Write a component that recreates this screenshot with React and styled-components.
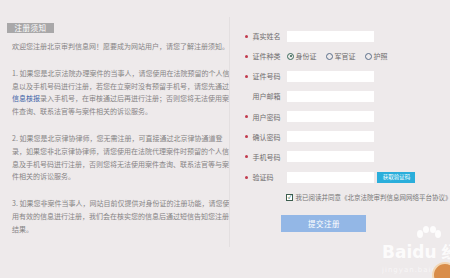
import styled, { createGlobalStyle } from "styled-components";

const GlobalStyle = createGlobalStyle`
  html, body {
    margin: 0;
    padding: 0;
    background: #eeeaeb;
  }
  body {
    font-family: "Noto Sans CJK SC", "Noto Sans", sans-serif;
  }
`;

const Page = styled.div`
  position: relative;
  width: 450px;
  height: 278px;
  display: flex;
  background: #eeeaeb;
  overflow: hidden;
`;

const EdgeStrip = styled.div`
  width: 3px;
  background: #8e9db2;
`;

const NoticePanel = styled.div`
  width: 247px;
  padding: 23px 0 0 7px;
  box-sizing: border-box;
`;

const NoticeTab = styled.div`
  width: 47px;
  height: 10px;
  background: #a9a8a9;
  color: #fff;
  font-size: 7.5px;
  line-height: 10px;
  text-align: center;
  letter-spacing: 0.5px;
`;

const NoticeBody = styled.div`
  padding: 7px 0 0 5px;
  color: #868485;
  font-size: 7px;
  line-height: 12.8px;
  white-space: nowrap;
`;

const Para = styled.p`
  margin: 0 0 14px;
`;

const Link = styled.span`
  color: #3e64a8;
`;

const FormPanel = styled.div`
  margin-top: 17px;
  height: 230px;
  flex: 1;
  border-left: 1px solid #e3dfe0;
  padding: 9px 0 0 15px;
  box-sizing: border-box;
  font-size: 7px;
  color: #6e6c6d;
`;

const Row = styled.div`
  display: flex;
  align-items: center;
  height: 20.15px;
`;

const Dot = styled.span`
  width: 3px;
  height: 3px;
  border-radius: 50%;
  background: ${(p) => (p.$show ? "#c23b4e" : "transparent")};
  margin-right: 4px;
`;

const Label = styled.span`
  width: 35px;
  white-space: nowrap;
`;

const Input = styled.div`
  width: 87px;
  height: 11px;
  background: #fff;
`;

const RadioGroup = styled.div`
  display: flex;
  gap: 10px;
`;

const RadioItem = styled.span`
  display: flex;
  align-items: center;
  gap: 1px;
  white-space: nowrap;
`;

const RadioCircle = styled.span`
  width: 5px;
  height: 5px;
  border: 1px solid ${(p) => (p.$on ? "#3a6a5a" : "#5a6f8a")};
  border-radius: 50%;
  display: flex;
  align-items: center;
  justify-content: center;
  &::after {
    content: "";
    width: 2px;
    height: 2px;
    border-radius: 50%;
    background: ${(p) => (p.$on ? "#2f5f4d" : "transparent")};
  }
`;

const CodeButton = styled.span`
  margin-left: 3px;
  width: 38px;
  height: 11px;
  background: #2aaedb;
  color: #fff;
  font-size: 5.5px;
  line-height: 11px;
  text-align: center;
`;

const AgreeRow = styled.div`
  display: flex;
  align-items: center;
  gap: 2px;
  margin: 5px 0 0 41px;
  white-space: nowrap;
  font-size: 6.5px;
  color: #777;
`;

const CheckBox = styled.span`
  width: 5px;
  height: 5px;
  border: 1px solid #3c5d4e;
  background: #fff;
  display: flex;
  align-items: center;
  justify-content: center;
  font-size: 6px;
  line-height: 1;
  color: #2f5f4d;
`;

const SubmitButton = styled.div`
  margin: 13px 0 0 36px;
  width: 85px;
  height: 17px;
  background: #93b7e6;
  color: #fff;
  font-size: 7.5px;
  line-height: 17px;
  text-align: center;
  letter-spacing: 0.5px;
`;

const Watermark = styled.div`
  position: absolute;
  left: 382px;
  top: 226px;
  width: 68px;
  height: 52px;
  overflow: hidden;
  color: rgba(255, 255, 255, 0.85);
  font-family: "DejaVu Sans", sans-serif;
  pointer-events: none;
  white-space: nowrap;
`;

const WaterWord = styled.div`
  position: absolute;
  left: 0;
  top: 15px;
  font-size: 17px;
  font-weight: bold;
  line-height: 22px;
`;

const WaterSub = styled.div`
  position: absolute;
  left: 0;
  top: 39px;
  font-size: 7px;
  line-height: 10px;
  color: rgba(255, 255, 255, 0.6);
  letter-spacing: 1px;
`;

const Avatar = styled.div`
  position: absolute;
  right: -8px;
  bottom: -10px;
  width: 22px;
  height: 22px;
  border-radius: 50%;
  background: #d98d4a;
  border: 2px solid #f3d7b5;
`;

const fields = [
  { label: "真实姓名", req: true },
  { label: "证件种类", req: true, radio: true },
  { label: "证件号码", req: true },
  { label: "用户邮箱", req: false },
  { label: "用户密码", req: true },
  { label: "确认密码", req: true },
  { label: "手机号码", req: true },
  { label: "验证码", req: true, code: true },
];

const App = () => {
  return (
    <Page>
      <GlobalStyle />
      <EdgeStrip />
      <NoticePanel>
        <NoticeTab>注册须知</NoticeTab>
        <NoticeBody>
          <Para>欢迎您注册北京审判信息网！愿要成为网站用户，请您了解注册须知。</Para>
          <Para>
            1. 如果您是北京法院办理案件的当事人，请您使用在法院预留的个人信
            <br />
            息以及手机号码进行注册，若您在立案时没有预留手机号，请您先通过
            <br />
            <Link>信息核报</Link>录入手机号，在审核通过后再进行注册；否则您将无法使用案
            <br />
            件查询、联系法官等与案件相关的诉讼服务。
          </Para>
          <Para>
            2. 如果您是北京律协律师，您无需注册，可直接通过北京律协通道登
            <br />
            录，如果您非北京律协律师，请您使用在法院代理案件时预留的个人信
            <br />
            息及手机号码进行注册，否则您将无法使用案件查询、联系法官等与案
            <br />
            件相关的诉讼服务。
          </Para>
          <Para>
            3. 如果您非案件当事人，网站目前仅提供对身份证的注册功能，请您使
            <br />
            用有效的信息进行注册，我们会在核实您的信息后通过短信告知您注册
            <br />
            结果。
          </Para>
        </NoticeBody>
      </NoticePanel>
      <FormPanel>
        {fields.map((f) => (
          <Row key={f.label}>
            <Dot $show={f.req} />
            <Label>{f.label}</Label>
            {f.radio ? (
              <RadioGroup>
                <RadioItem>
                  <RadioCircle $on />
                  身份证
                </RadioItem>
                <RadioItem>
                  <RadioCircle />
                  军官证
                </RadioItem>
                <RadioItem>
                  <RadioCircle />
                  护照
                </RadioItem>
              </RadioGroup>
            ) : (
              <Input />
            )}
            {f.code && <CodeButton>获取验证码</CodeButton>}
          </Row>
        ))}
        <AgreeRow>
          <CheckBox>✓</CheckBox>
          我已阅读并同意《北京法院审判信息网网络平台协议》
        </AgreeRow>
        <SubmitButton>提交注册</SubmitButton>
      </FormPanel>
      <Watermark>
        <svg width="28" height="22" viewBox="0 0 28 22" style={{ position: "absolute", left: 32, top: 0 }}>
          <g fill="rgba(255,255,255,0.85)">
            <ellipse cx="6" cy="8" rx="3" ry="4" />
            <ellipse cx="12" cy="3.5" rx="3" ry="3.5" />
            <ellipse cx="19" cy="3.5" rx="3" ry="3.5" />
            <ellipse cx="24" cy="8" rx="3" ry="4" />
          </g>
        </svg>
        <WaterWord>Baidu 经</WaterWord>
        <WaterSub>jingyan.baidu</WaterSub>
      </Watermark>
      <Avatar />
    </Page>
  );
};

export default App;
